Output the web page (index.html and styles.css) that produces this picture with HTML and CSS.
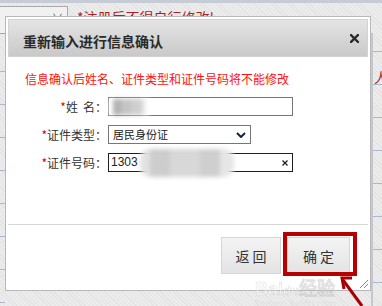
FILE: index.html
```html
<!DOCTYPE html>
<html lang="zh-CN">
<head>
<meta charset="utf-8">
<title>重新输入进行信息确认</title>
<link rel="stylesheet" href="styles.css">
</head>
<body>
<div class="backdrop">
  <div class="topbar"></div>
  <div class="bg-row">
    <div class="bg-select"><span class="bg-chev">∨</span></div>
    <div class="bg-note">*注册后不得自行修改!</div>
  </div>
  <div class="bg-cols">
    <div class="bg-left"></div>
    <div class="bg-mid"></div>
    <div class="bg-right"><span class="bg-ren">人</span></div>
  </div>
</div>

<div class="dialog">
  <div class="dlg-head">
    <h2 class="dlg-title">重新输入进行信息确认</h2>
    <svg class="close" width="9" height="9" viewBox="0 0 9 9"><path d="M1 1L8 8M8 1L1 8" stroke="#2a2a2a" stroke-width="2.4" stroke-linecap="square"/></svg>
  </div>
  <div class="dlg-body">
    <p class="notice">信息确认后姓名、证件类型和证件号码将不能修改</p>
    <div class="form">
      <div class="lbl"><span class="req">*</span>姓<span class="gap"></span>名：</div>
      <div class="field input"><span class="blur blur-name"></span></div>

      <div class="lbl"><span class="req">*</span>证件类型：</div>
      <div class="field select">
        <span class="val">居民身份证</span>
        <svg class="chev" width="10" height="6" viewBox="0 0 10 6"><path d="M1 1L5 5L9 1" fill="none" stroke="#15233a" stroke-width="2"/></svg>
      </div>

      <div class="lbl"><span class="req">*</span>证件号码：</div>
      <div class="field input focus">
        <span class="val num">1303</span>
        <svg class="clear" width="6" height="6" viewBox="0 0 6 6"><path d="M0.5 0.5L5.5 5.5M5.5 0.5L0.5 5.5" stroke="#222" stroke-width="1.3"/></svg>
        <span class="blur blur-id"></span>
      </div>
    </div>
  </div>
  <div class="dlg-foot">
    <button class="btn btn-back">返 回</button>
    <button class="btn btn-ok">确 定</button>
  </div>
  <svg class="grip" width="11" height="11" viewBox="0 0 11 11"><path d="M10 2L2 10M10 6L6 10" stroke="#8a8a8a" stroke-width="1"/></svg>
</div>

<div class="highlight"></div>

<div class="watermark">
  <span class="wm-logo">Bai<span class="wm-paw">du</span>经验</span>
  <span class="wm-url">jingyan.baidu.com</span>
</div>

<svg class="arrow" width="47" height="34" viewBox="0 0 47 34">
  <path d="M27 34L8 8" stroke="#a80000" stroke-width="3" fill="none"/>
  <path d="M17 6L7 6L9 17" stroke="#a80000" stroke-width="3" fill="none"/>
</svg>
</body>
</html>
```

FILE: styles.css
```css
html, body {
  margin: 0;
  padding: 0;
}

body {
  width: 382px;
  height: 306px;
  overflow: hidden;
  position: relative;
  font-family: "Noto Sans CJK SC", "Noto Sans", sans-serif;
  background: repeating-linear-gradient(45deg, #e3e3e3 0 1px, #ececec 1px 3px);
}

/* page behind the dialog */
.backdrop {
  display: flex;
  flex-direction: column;
  height: 306px;
}

.topbar {
  height: 3px;
  background: #c5ccd6;
}

.bg-row {
  display: flex;
  align-items: flex-start;
  padding-top: 3px;
  height: 27px;
}

.bg-select {
  width: 67px;
  height: 26px;
  margin-left: -1px;
  border: 1px solid #a9a9a9;
  background: #f1f1f1;
  position: relative;
}

.bg-chev {
  position: absolute;
  right: 4px;
  top: 2px;
  font-size: 11px;
  color: #555;
}

.bg-note {
  margin-left: 9px;
  font-size: 14px;
  line-height: 18px;
  padding-top: 2px;
  color: #b02020;
}

.bg-cols {
  flex: 1;
  display: flex;
}

.bg-left {
  width: 5px;
  background: repeating-linear-gradient(180deg, transparent 0 32px, #a9b8cc 32px 33px);
  background-position: 0 6px;
}

.bg-mid {
  flex: 1;
}

.bg-right {
  width: 9px;
  border-left: 2px solid #c4c8ce;
  background: repeating-linear-gradient(180deg, transparent 0 32px, #a9b8cc 32px 33px);
  background-position: 0 -14px;
  position: relative;
  overflow: hidden;
}

.bg-ren {
  position: absolute;
  left: 1px;
  top: 36px;
  font-size: 14px;
  line-height: 16px;
  color: #a03030;
}

/* dialog */
.dialog {
  position: absolute;
  left: 5px;
  top: 16px;
  width: 366px;
  height: 275px;
  box-sizing: border-box;
  border: 1px solid #b8b8b8;
  background: #fff;
  padding: 2px;
  display: flex;
  flex-direction: column;
}

.dlg-head {
  height: 38px;
  flex: none;
  box-sizing: border-box;
  border: 1px solid #d2d2d2;
  background: linear-gradient(#e4e4e4, #c9c9c9);
  display: flex;
  align-items: center;
  justify-content: space-between;
  padding: 0 8px 0 14px;
}

.dlg-title {
  margin: 0;
  padding-top: 5px;
  font-size: 14px;
  font-weight: bold;
  color: #2a2a2a;
  line-height: 18px;
}

.close {
  display: block;
}

.dlg-body {
  flex: 1;
  padding: 14px 0 0 17px;
}

.notice {
  margin: 0;
  font-size: 12px;
  line-height: 16px;
  color: #ff1010;
}

.form {
  margin-top: 10px;
  display: grid;
  grid-template-columns: 82px auto;
  column-gap: 1px;
  row-gap: 9px;
  justify-items: start;
}

.lbl {
  justify-self: end;
  font-size: 12px;
  line-height: 19px;
  color: #333;
  white-space: pre;
}

.gap {
  display: inline-block;
  width: 5px;
}

.req {
  color: #e00000;
}

.field {
  position: relative;
  height: 19px;
  box-sizing: border-box;
  border: 1px solid #767676;
  background: #fff;
  display: flex;
  align-items: center;
}

.input {
  width: 185px;
}

.select {
  width: 143px;
  justify-content: space-between;
  padding: 0 4px 0 4px;
}

.focus {
  border-color: #1e1e1e;
  padding: 0 4px 0 2px;
  justify-content: space-between;
}

.val {
  font-size: 11px;
  line-height: 17px;
  color: #222;
}

.num {
  font-family: "Liberation Sans", Arial, sans-serif;
  font-size: 12px;
}

.chev,
.clear {
  display: block;
}

.blur {
  position: absolute;
  filter: blur(2px);
}

.blur-name {
  left: 0;
  top: 1px;
  width: 40px;
  height: 16px;
  background: linear-gradient(90deg, #fff 0 4px, #b2b2b2 4px 12px, #c4c4c4 12px 22px, #cfcfcf 22px 31px, #fff 38px);
}

.blur-id {
  left: 31px;
  top: -5px;
  width: 94px;
  height: 28px;
  border-radius: 10px;
  background: linear-gradient(90deg, #e2e2e2 0 10px, #cdcdcd 10px 30px, #d8d8d8 30px 60px, #cfcfcf 60px 80px, #e6e6e6 80px);
}

.dlg-foot {
  height: 64px;
  flex: none;
  box-sizing: border-box;
  border-top: 1px solid #d6d6d6;
  display: flex;
  justify-content: flex-end;
  align-items: flex-start;
  gap: 6px;
  padding: 12px 18px 0 0;
}

.btn {
  height: 37px;
  box-sizing: border-box;
  border: 1px solid #d6d6d6;
  background: linear-gradient(#f4f4f4, #e3e3e3);
  font-family: "Noto Sans CJK SC", sans-serif;
  font-size: 14px;
  color: #333;
  padding: 0;
  margin: 0;
}

.btn-back {
  width: 60px;
}

.btn-ok {
  width: 63px;
}

.grip {
  position: absolute;
  right: 1px;
  bottom: 1px;
}

/* annotations over the screenshot */
.highlight {
  position: absolute;
  left: 283px;
  top: 232px;
  width: 74px;
  height: 44px;
  box-sizing: border-box;
  border: 4px solid #b70000;
}

.watermark {
  position: absolute;
  left: 255px;
  top: 280px;
  display: flex;
  flex-direction: column;
  opacity: 0.45;
}

.wm-logo {
  font-family: "Liberation Sans", Arial, sans-serif;
  font-weight: bold;
  font-size: 18px;
  line-height: 19px;
  color: #fff;
  -webkit-text-stroke: 0.6px #bdbdbd;
}

.wm-paw {
  font-size: 13px;
}

.wm-url {
  font-family: "Liberation Sans", Arial, sans-serif;
  font-size: 10px;
  line-height: 10px;
  color: #fff;
  -webkit-text-stroke: 0.4px #c8c8c8;
}

.arrow {
  position: absolute;
  left: 335px;
  top: 272px;
}
```
